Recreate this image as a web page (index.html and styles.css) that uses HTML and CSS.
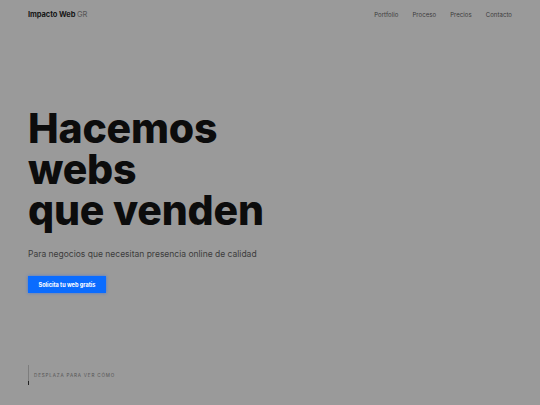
FILE: index.html
```html
<!DOCTYPE html>
<html lang="es">
<head>
<meta charset="utf-8">
<link rel="stylesheet" href="styles.css">
</head>
<body>
<div class="page">
  <header class="nav">
    <div class="brand">Impacto Web <span class="brand-gr">GR</span></div>
    <nav class="links">
      <span>Portfolio</span>
      <span>Proceso</span>
      <span>Precios</span>
      <span>Contacto</span>
    </nav>
  </header>
  <main class="hero">
    <h1 class="title">Hacemos<br>webs<br>que venden</h1>
    <p class="sub">Para negocios que necesitan presencia online de calidad</p>
    <a class="cta">Solicita tu web gratis</a>
  </main>
  <div class="scroll">
    <div class="scroll-line"><span class="scroll-tick"></span></div>
    <span class="scroll-text">DESPLAZA PARA VER CÓMO</span>
  </div>
</div>
</body>
</html>
```
FILE: styles.css
```css
* { box-sizing: border-box; }
html, body { margin: 0; padding: 0; }
body {
  background: #9a9a9a;
  font-family: Inter, "Liberation Sans", sans-serif;
  color: #111;
}
.page {
  width: 540px;
  height: 405px;
  display: flex;
  flex-direction: column;
  padding: 0 28px;
}
.nav {
  height: 29px;
  display: flex;
  align-items: center;
  justify-content: space-between;
}
.brand {
  font-size: 7.5px;
  font-weight: 700;
  color: #161616;
  letter-spacing: -0.01em;
}
.brand-gr { font-weight: 400; color: #555; }
.links {
  display: flex;
  gap: 14px;
  font-size: 6px;
  color: #3a3a3a;
  letter-spacing: 0.01em;
}
.hero {
  padding-top: 79px;
  display: flex;
  flex-direction: column;
  align-items: flex-start;
}
.title {
  margin: 0;
  font-size: 41px;
  line-height: 41px;
  font-weight: 800;
  letter-spacing: -0.005em;
  color: #0c0c0c;
}
.sub {
  margin: 18px 0 0;
  font-size: 8.5px;
  color: #3c3c3c;
}
.cta {
  margin-top: 17px;
  background: #0a6cff;
  color: #fff;
  font-size: 5.6px;
  font-weight: 700;
  width: 78px;
  height: 17px;
  display: flex;
  align-items: center;
  justify-content: center;
  box-shadow: 0 0 3px rgba(20, 100, 255, 0.6);
}
.scroll {
  margin-top: auto;
  margin-bottom: 20px;
  display: flex;
  align-items: flex-start;
  gap: 5px;
}
.scroll-line {
  width: 1px;
  height: 20px;
  background: #7d7d7d;
  position: relative;
}
.scroll-tick {
  position: absolute;
  left: 0;
  bottom: 0;
  width: 1px;
  height: 4px;
  background: #222;
}
.scroll-text {
  margin-top: 8px;
  font-size: 4.6px;
  letter-spacing: 0.18em;
  color: #555;
}
```
